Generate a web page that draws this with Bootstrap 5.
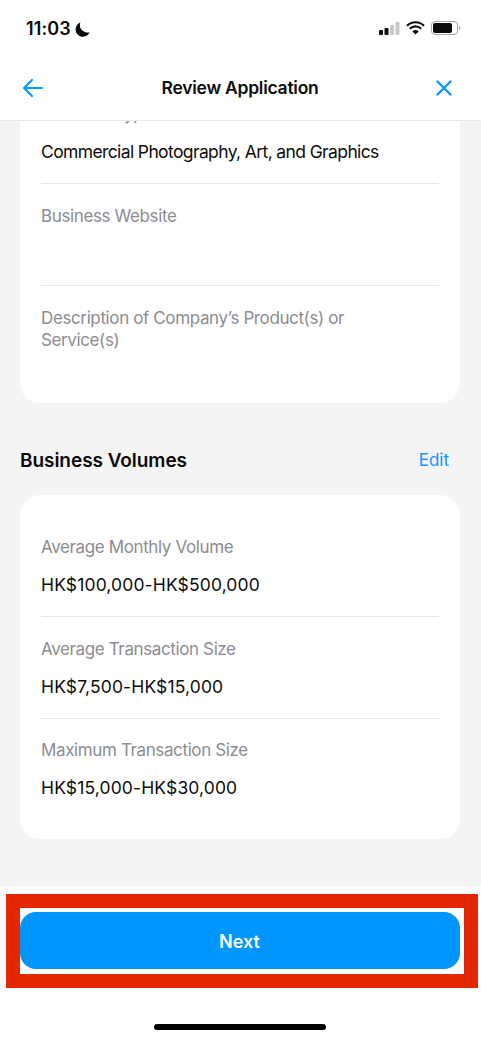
<!DOCTYPE html>
<html lang="en">
<head>
<meta charset="utf-8">
<title>Review Application</title>
<meta name="viewport" content="width=device-width, initial-scale=1">
<link rel="stylesheet" href="https://cdn.jsdelivr.net/npm/bootstrap@5.3.0/dist/css/bootstrap.min.css">
<style>
html,body{height:100%;}
body{font-family:Inter,"Liberation Sans",sans-serif;background:#fff;color:#0b0b0b;overflow:hidden;}
.phone{height:1039px;width:481px;}
.status-row{height:60px;padding:17px 20px 0 26px;}
.clock{font-size:18px;font-weight:600;line-height:24px;letter-spacing:.1px;}
.status-icons{gap:6px;padding-top:4px;}
.app-head{height:61px;padding:0 29px 4px 22px;border-bottom:1px solid #e9e9e9;position:relative;z-index:2;background:#fff;}
.app-title{font-size:17.5px;font-weight:600;letter-spacing:-.25px;}
.scroller{height:765px;background:#f4f4f4;overflow:hidden;padding:0 21px 0 20px;}
.scroller-in{margin-top:-36px;}
.sheet{background:#fff;border-radius:20px;padding:0 21px;}
.sheet-a{height:318px;}
.sheet-b{height:344px;padding-top:1px;}
.entry{border-bottom:1px solid #e6e6e6;height:102px;padding-top:21px;}
.entry:last-child{border-bottom:0;}
.entry-first{height:98.500px;padding-top:18px;}
.sheet-b .entry{height:101.5px;padding-top:21px;}
.sheet-b .entry-top{height:121px;padding-top:40px;}
.sheet-b .entry:last-child{padding-top:20.500px;}
.lbl{font-size:17px;line-height:22px;color:#8c8c91;letter-spacing:-.38px;}
.val{font-size:17.5px;line-height:22px;color:#0d0d0d;letter-spacing:.13px;margin-top:16px;}
.val-text{letter-spacing:-.62px;}
.sec-head{height:92px;padding:24px 11px 0 0;}
.sec-name{font-size:19px;font-weight:600;letter-spacing:-.05px;}
.sec-edit{font-size:17px;color:#1196fb;text-decoration:none;}
.foot{height:153px;padding:7.500px 3px 0 6px;}
.mark-box{border:14px solid #e32800;height:94px;padding:4.500px 4px 4px 0;width:472px;}
.go-btn{background:#0096ff;color:#fff;border:0;border-radius:16px;width:100%;height:57px;font-size:18px;font-weight:600;padding:2px 12px 0 11px;}
.home-bar{width:172px;height:6px;border-radius:3px;background:#000;margin:36px auto 0;transform:translateX(-2px);}
</style>
</head>
<body>
<div class="phone d-flex flex-column">
  <div class="status-row d-flex justify-content-between align-items-start">
    <div class="d-flex align-items-center gap-1">
      <span class="clock">11:03</span>
      <svg width="15" height="15" viewBox="0 0 16 16"><path fill="#0b0b0b" d="M5.800 .6A7.800 7.800 0 1 0 15.700 10.800 7.200 7.200 0 0 1 10 10.300 7.200 7.200 0 0 1 5.800 .6Z"/></svg>
    </div>
    <div class="status-icons d-flex align-items-center">
      <svg width="21" height="13" viewBox="0 0 21 13"><rect x="0" y="8" width="4" height="5" rx="1" fill="#0b0b0b"/><rect x="5.500" y="6" width="4" height="7" rx="1" fill="#0b0b0b"/><rect x="11" y="3" width="4" height="10" rx="1" fill="#c8c8c8"/><rect x="16.500" y="0" width="4" height="13" rx="1" fill="#c8c8c8"/></svg>
      <svg width="19" height="14" viewBox="0 0 19 14"><path fill="none" stroke="#0b0b0b" stroke-width="2.200" d="M1 4.800a12 12 0 0 1 17 0M3.800 7.800a8 8 0 0 1 11.400 0"/><path fill="#0b0b0b" d="M9.500 13.600 6.400 10.400a4.400 4.400 0 0 1 6.200 0Z"/></svg>
      <svg width="30" height="14" viewBox="0 0 30 14"><rect x=".5" y=".5" width="26" height="13" rx="3.500" fill="none" stroke="#a6a6a6"/><rect x="2" y="2" width="19" height="10" rx="2" fill="#0b0b0b"/><path d="M28 5v4c.9-.3 1.400-1 1.400-2s-.5-1.700-1.400-2Z" fill="#a6a6a6"/></svg>
    </div>
  </div>
  <div class="app-head d-flex justify-content-between align-items-center">
    <svg width="22" height="20" viewBox="0 0 22 20" fill="none" stroke="#0a96f8" stroke-width="2.200" stroke-linecap="round" stroke-linejoin="round"><path d="M2 10h18M10 2 2 10l8 8"/></svg>
    <span class="app-title">Review Application</span>
    <svg width="16" height="16" viewBox="0 0 16 16" fill="none" stroke="#0a96f8" stroke-width="2.200" stroke-linecap="round"><path d="M1.500 1.500l13 13M14.500 1.500l-13 13"/></svg>
  </div>
  <div class="scroller">
    <div class="scroller-in">
      <div class="sheet sheet-a">
        <div class="entry entry-first">
          <div class="lbl">Business Type</div>
          <div class="val val-text">Commercial Photography, Art, and Graphics</div>
        </div>
        <div class="entry">
          <div class="lbl">Business Website</div>
          <div class="val">&nbsp;</div>
        </div>
        <div class="entry">
          <div class="lbl">Description of Company’s Product(s) or<br>Service(s)</div>
        </div>
      </div>
      <div class="sec-head d-flex justify-content-between align-items-center">
        <span class="sec-name">Business Volumes</span>
        <a class="sec-edit" href="#">Edit</a>
      </div>
      <div class="sheet sheet-b">
        <div class="entry entry-top">
          <div class="lbl">Average Monthly Volume</div>
          <div class="val">HK$100,000-HK$500,000</div>
        </div>
        <div class="entry">
          <div class="lbl">Average Transaction Size</div>
          <div class="val">HK$7,500-HK$15,000</div>
        </div>
        <div class="entry">
          <div class="lbl">Maximum Transaction Size</div>
          <div class="val">HK$15,000-HK$30,000</div>
        </div>
      </div>
    </div>
  </div>
  <div class="foot">
    <div class="mark-box">
      <button class="btn go-btn" type="button">Next</button>
    </div>
    <div class="home-bar"></div>
  </div>
</div>
<script src="https://cdn.jsdelivr.net/npm/bootstrap@5.3.0/dist/js/bootstrap.bundle.min.js"></script>
</body>
</html>
